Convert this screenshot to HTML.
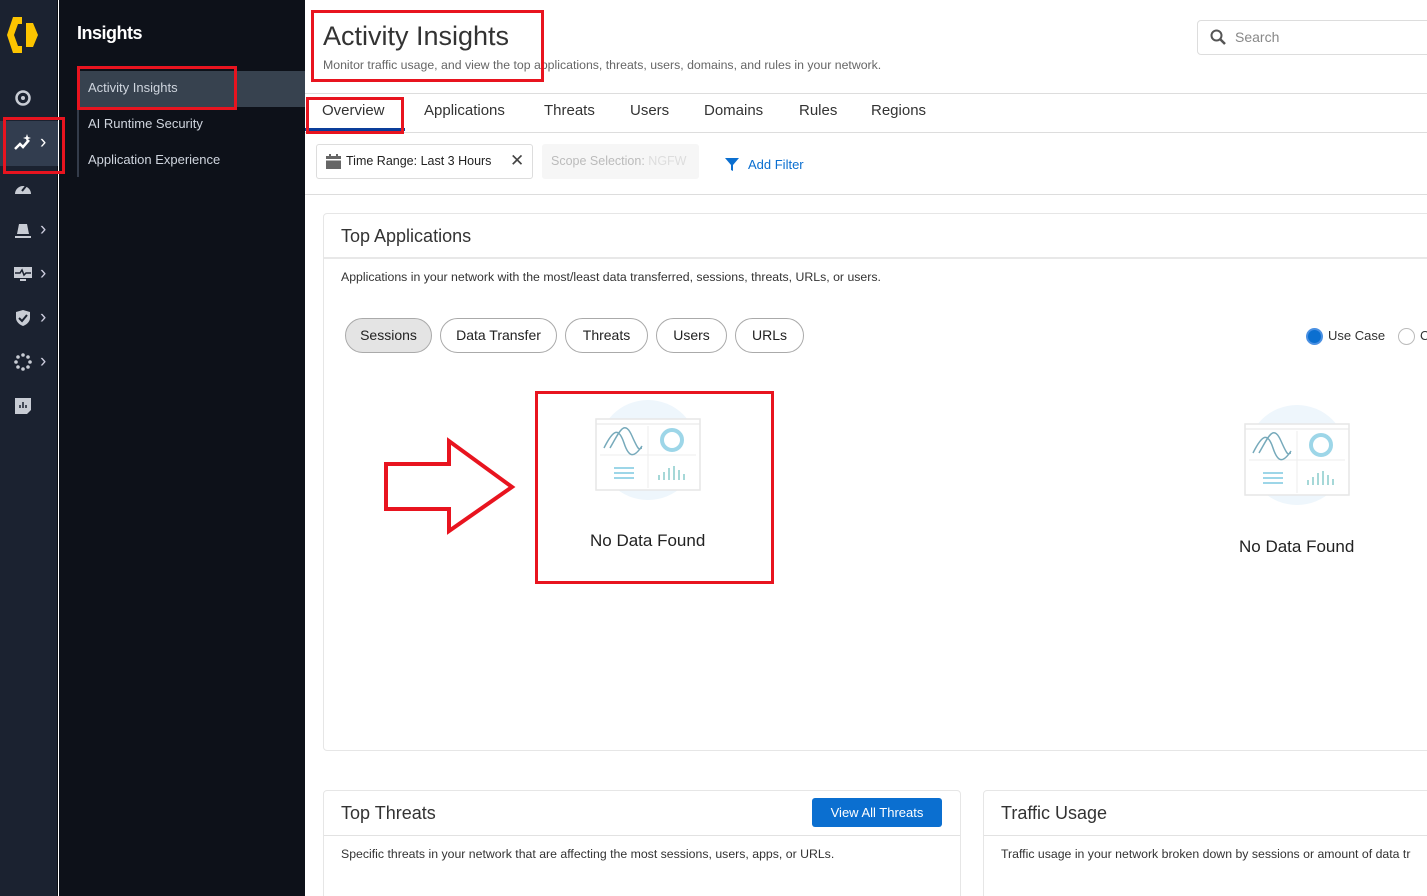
<!DOCTYPE html>
<html><head><meta charset="utf-8"><style>
*{box-sizing:border-box;margin:0;padding:0}
html,body{width:1427px;height:896px;overflow:hidden}
body{position:relative;background:#fff;font-family:"Liberation Sans",sans-serif;color:#333}
.abs{position:absolute}
.rail{left:0;top:0;width:58px;height:896px;background:#1b2230;border-right:1px solid #0a0d12}
.sub{left:59px;top:0;width:246px;height:896px;background:#0d1119}
.red{position:absolute;border:3px solid #e8141f}
.tab{position:absolute;top:102px;font-size:15px;color:#333}
.pill{position:absolute;top:318px;height:35px;border:1px solid #aaa;border-radius:18px;font-size:14px;line-height:33px;text-align:center;color:#222}
.ic{position:absolute;left:14px;width:18px;height:18px}
.chev{position:absolute;left:40px;color:#ccd;font-size:19px;line-height:18px}
</style></head><body>
<div class="abs rail"></div>
<div class="abs sub"></div>
<svg class="abs" style="left:6px;top:15px" width="36" height="40" viewBox="0 0 36 40"><path d="M7 2 H16 V9 H12 L8 20 L12 31 H16 V38 H7 L1 20 Z" fill="#fcc400"/><path d="M20 8 H27 L32 20 L27 32 H20 Z" fill="#fcc400"/></svg>
<svg class="ic" style="top:89px" viewBox="0 0 18 18"><circle cx="9" cy="9" r="6.5" fill="none" stroke="#c8ccd4" stroke-width="2.5"/><circle cx="9" cy="9" r="2" fill="#c8ccd4"/></svg>
<div class="abs" style="left:0;top:121px;width:58px;height:45px;background:#323d4f"></div>
<svg class="ic" style="top:134px" viewBox="0 0 18 18"><path d="M1 15 L6 10 L9 13 L15 6" fill="none" stroke="#fff" stroke-width="2.5"/><path d="M13 0 L14 3 L17 4 L14 5 L13 8 L12 5 L9 4 L12 3Z" fill="#fff"/></svg>
<div class="chev" style="top:134px;color:#fff">›</div>
<svg class="ic" style="top:179px" viewBox="0 0 18 18"><path d="M1 15 A8 8 0 1 1 17 15 Z" fill="#c8ccd4"/><path d="M8 12 L12 7" stroke="#1b2230" stroke-width="2"/></svg>
<svg class="ic" style="top:221px" viewBox="0 0 18 18"><path d="M3 13 L5 3 H13 L15 13 Z" fill="#c8ccd4"/><rect x="1" y="15" width="16" height="2" fill="#c8ccd4"/></svg><div class="chev" style="top:221px">›</div>
<svg class="ic" style="top:265px" viewBox="0 0 18 18"><rect x="0" y="2" width="18" height="11" fill="#c8ccd4"/><path d="M1 8 H6 L8 5 L10 10 L12 8 H17" fill="none" stroke="#1b2230" stroke-width="1.5"/><rect x="6" y="14" width="6" height="2" fill="#c8ccd4"/></svg><div class="chev" style="top:265px">›</div>
<svg class="ic" style="top:309px" viewBox="0 0 18 18"><path d="M9 1 L16 3 V9 C16 13 12 16 9 17 C6 16 2 13 2 9 V3 Z" fill="#c8ccd4"/><path d="M5 9 L8 12 L13 6" fill="none" stroke="#1b2230" stroke-width="2"/></svg><div class="chev" style="top:309px">›</div>
<svg class="ic" style="top:353px" viewBox="0 0 18 18" fill="#c8ccd4"><circle cx="9" cy="2" r="1.8"/><circle cx="14" cy="4" r="1.8"/><circle cx="16" cy="9" r="1.8"/><circle cx="14" cy="14" r="1.8"/><circle cx="9" cy="16" r="1.8"/><circle cx="4" cy="14" r="1.8"/><circle cx="2" cy="9" r="1.8"/><circle cx="4" cy="4" r="1.8"/></svg><div class="chev" style="top:353px">›</div>
<svg class="ic" style="top:397px" viewBox="0 0 18 18"><path d="M1 1 H17 V13 L13 17 H1 Z" fill="#c8ccd4"/><path d="M6 11V8 M9 11V5 M12 11V8" stroke="#1b2230" stroke-width="1.5"/></svg>
<div class="red" style="left:3px;top:117px;width:62px;height:57px"></div>
<div class="abs" style="left:77px;top:23px;font-size:18px;font-weight:bold;color:#fff;letter-spacing:-0.5px">Insights</div>
<div class="abs" style="left:77px;top:70px;width:2px;height:107px;background:#343c4a"></div>
<div class="abs" style="left:79px;top:71px;width:226px;height:36px;background:#37424f"></div>
<div class="abs" style="left:88px;top:80px;font-size:13px;color:#cfd5de">Activity Insights</div>
<div class="abs" style="left:88px;top:116px;font-size:13px;color:#cfd5de">AI Runtime Security</div>
<div class="abs" style="left:88px;top:152px;font-size:13px;color:#cfd5de">Application Experience</div>
<div class="red" style="left:77px;top:66px;width:160px;height:44px"></div>
<div class="abs" style="left:323px;top:21px;font-size:27px;color:#333">Activity Insights</div>
<div class="abs" style="left:323px;top:58px;font-size:12.3px;color:#666">Monitor traffic usage, and view the top applications, threats, users, domains, and rules in your network.</div>
<div class="red" style="left:311px;top:10px;width:233px;height:72px"></div>
<div class="abs" style="left:1197px;top:20px;width:240px;height:35px;border:1px solid #ddd;border-radius:4px"></div>
<svg class="abs" style="left:1210px;top:29px" width="16" height="16" viewBox="0 0 16 16"><circle cx="6.5" cy="6.5" r="5" fill="none" stroke="#555" stroke-width="2"/><path d="M10 10 L15 15" stroke="#555" stroke-width="2.5"/></svg>
<div class="abs" style="left:1235px;top:29px;font-size:14px;color:#888">Search</div>
<div class="abs" style="left:305px;top:93px;width:1122px;height:1px;background:#ddd"></div>
<div class="abs" style="left:305px;top:132px;width:1122px;height:1px;background:#ddd"></div>
<div class="abs" style="left:305px;top:128px;width:100px;height:3px;background:#0a3e9a"></div>
<div class="tab" style="left:322px">Overview</div>
<div class="tab" style="left:424px">Applications</div>
<div class="tab" style="left:544px">Threats</div>
<div class="tab" style="left:630px">Users</div>
<div class="tab" style="left:704px">Domains</div>
<div class="tab" style="left:799px">Rules</div>
<div class="tab" style="left:871px">Regions</div>
<div class="red" style="left:306px;top:97px;width:98px;height:37px"></div>
<div class="abs" style="left:316px;top:144px;width:217px;height:35px;border:1px solid #ddd;border-radius:3px"></div>
<svg class="abs" style="left:326px;top:154px" width="15" height="15" viewBox="0 0 15 15"><rect x="0" y="2" width="15" height="13" fill="#666"/><rect x="0" y="5" width="15" height="1.5" fill="#fff"/><rect x="3" y="0" width="2" height="3" fill="#666"/><rect x="10" y="0" width="2" height="3" fill="#666"/></svg>
<div class="abs" style="left:346px;top:154px;font-size:12.5px;color:#222">Time Range: Last 3 Hours</div>
<div class="abs" style="left:510px;top:151px;font-size:17px;color:#444">✕</div>
<div class="abs" style="left:542px;top:144px;width:157px;height:35px;background:#f6f6f6;border-radius:3px"></div>
<div class="abs" style="left:551px;top:154px;font-size:12.5px;color:#bbb">Scope Selection: <span style="color:#ddd">NGFW</span></div>
<svg class="abs" style="left:725px;top:158px" width="14" height="13" viewBox="0 0 14 13"><path d="M0 0 H14 L8 7 V13 L6 12 V7 Z" fill="#0b6fd0"/></svg>
<div class="abs" style="left:748px;top:157px;font-size:13px;color:#0b6fd0">Add Filter</div>
<div class="abs" style="left:305px;top:194px;width:1122px;height:1px;background:#ddd"></div>
<div class="abs" style="left:323px;top:213px;width:1120px;height:538px;border:1px solid #e6e6e6;border-radius:4px"></div>
<div class="abs" style="left:341px;top:226px;font-size:18px;color:#333">Top Applications</div>
<div class="abs" style="left:324px;top:257px;width:1103px;height:2px;background:#e8e8e8"></div>
<div class="abs" style="left:341px;top:270px;font-size:12.3px;color:#333">Applications in your network with the most/least data transferred, sessions, threats, URLs, or users.</div>
<div class="pill" style="left:345px;width:87px;background:#e4e4e4">Sessions</div>
<div class="pill" style="left:440px;width:117px">Data Transfer</div>
<div class="pill" style="left:565px;width:83px">Threats</div>
<div class="pill" style="left:656px;width:71px">Users</div>
<div class="pill" style="left:735px;width:69px">URLs</div>
<div class="abs" style="left:1306px;top:328px;width:17px;height:17px;border-radius:50%;background:#0b6fd0;border:2px solid #4a90e2"></div>
<div class="abs" style="left:1328px;top:328px;font-size:13px;color:#333">Use Case</div>
<div class="abs" style="left:1398px;top:328px;width:17px;height:17px;border-radius:50%;border:1px solid #bbb"></div>
<div class="abs" style="left:1420px;top:328px;font-size:13px;color:#333">C</div>
<svg class="abs" style="left:594px;top:398px" width="108" height="104" viewBox="0 0 108 104"><circle cx="54" cy="52" r="50" fill="#eef6fc"/><rect x="2" y="21" width="104" height="71" fill="#fff" stroke="#e6e6e6" stroke-width="1.5"/><line x1="2" y1="26" x2="106" y2="26" stroke="#e6e6e6"/><line x1="54" y1="28" x2="54" y2="90" stroke="#eee"/><line x1="6" y1="57" x2="102" y2="57" stroke="#eee"/><path d="M10 50 C20 30 25 30 30 45 S40 60 48 48 M16 50 C25 35 30 20 38 38 S45 50 48 50" fill="none" stroke="#7ab" stroke-width="1.5"/><circle cx="78" cy="42" r="10" fill="none" stroke="#9dd6e8" stroke-width="4"/><path d="M20 70H40 M20 75H40 M20 80H40" stroke="#9dd6e8" stroke-width="2"/><path d="M65 82v-5 M70 82v-8 M75 82v-12 M80 82v-14 M85 82v-10 M90 82v-6" stroke="#8cc" stroke-width="1.5"/></svg>
<div class="abs" style="left:590px;top:531px;font-size:17px;color:#222">No Data Found</div>
<div class="red" style="left:535px;top:391px;width:239px;height:193px"></div>
<svg class="abs" style="left:1243px;top:403px" width="108" height="104" viewBox="0 0 108 104"><circle cx="54" cy="52" r="50" fill="#eef6fc"/><rect x="2" y="21" width="104" height="71" fill="#fff" stroke="#e6e6e6" stroke-width="1.5"/><line x1="2" y1="26" x2="106" y2="26" stroke="#e6e6e6"/><line x1="54" y1="28" x2="54" y2="90" stroke="#eee"/><line x1="6" y1="57" x2="102" y2="57" stroke="#eee"/><path d="M10 50 C20 30 25 30 30 45 S40 60 48 48 M16 50 C25 35 30 20 38 38 S45 50 48 50" fill="none" stroke="#7ab" stroke-width="1.5"/><circle cx="78" cy="42" r="10" fill="none" stroke="#9dd6e8" stroke-width="4"/><path d="M20 70H40 M20 75H40 M20 80H40" stroke="#9dd6e8" stroke-width="2"/><path d="M65 82v-5 M70 82v-8 M75 82v-12 M80 82v-14 M85 82v-10 M90 82v-6" stroke="#8cc" stroke-width="1.5"/></svg>
<div class="abs" style="left:1239px;top:537px;font-size:17px;color:#222">No Data Found</div>
<svg class="abs" style="left:380px;top:435px" width="140" height="102"><path d="M6 29 H69 V6 L132 52 L69 96 V74 H6 Z" fill="none" stroke="#e8141f" stroke-width="4"/></svg>
<div class="abs" style="left:323px;top:790px;width:638px;height:120px;border:1px solid #e6e6e6;border-radius:4px"></div>
<div class="abs" style="left:341px;top:803px;font-size:18px;color:#333">Top Threats</div>
<div class="abs" style="left:812px;top:798px;width:130px;height:29px;background:#0b6fd0;border-radius:3px;color:#fff;font-size:13px;line-height:29px;text-align:center">View All Threats</div>
<div class="abs" style="left:324px;top:835px;width:636px;height:1px;background:#e2e2e2"></div>
<div class="abs" style="left:341px;top:847px;font-size:12.3px;color:#333">Specific threats in your network that are affecting the most sessions, users, apps, or URLs.</div>
<div class="abs" style="left:983px;top:790px;width:460px;height:120px;border:1px solid #e6e6e6;border-radius:4px"></div>
<div class="abs" style="left:1001px;top:803px;font-size:18px;color:#333">Traffic Usage</div>
<div class="abs" style="left:984px;top:835px;width:443px;height:1px;background:#e2e2e2"></div>
<div class="abs" style="left:1001px;top:847px;font-size:12.3px;color:#333;white-space:nowrap">Traffic usage in your network broken down by sessions or amount of data tr</div>
</body></html>
